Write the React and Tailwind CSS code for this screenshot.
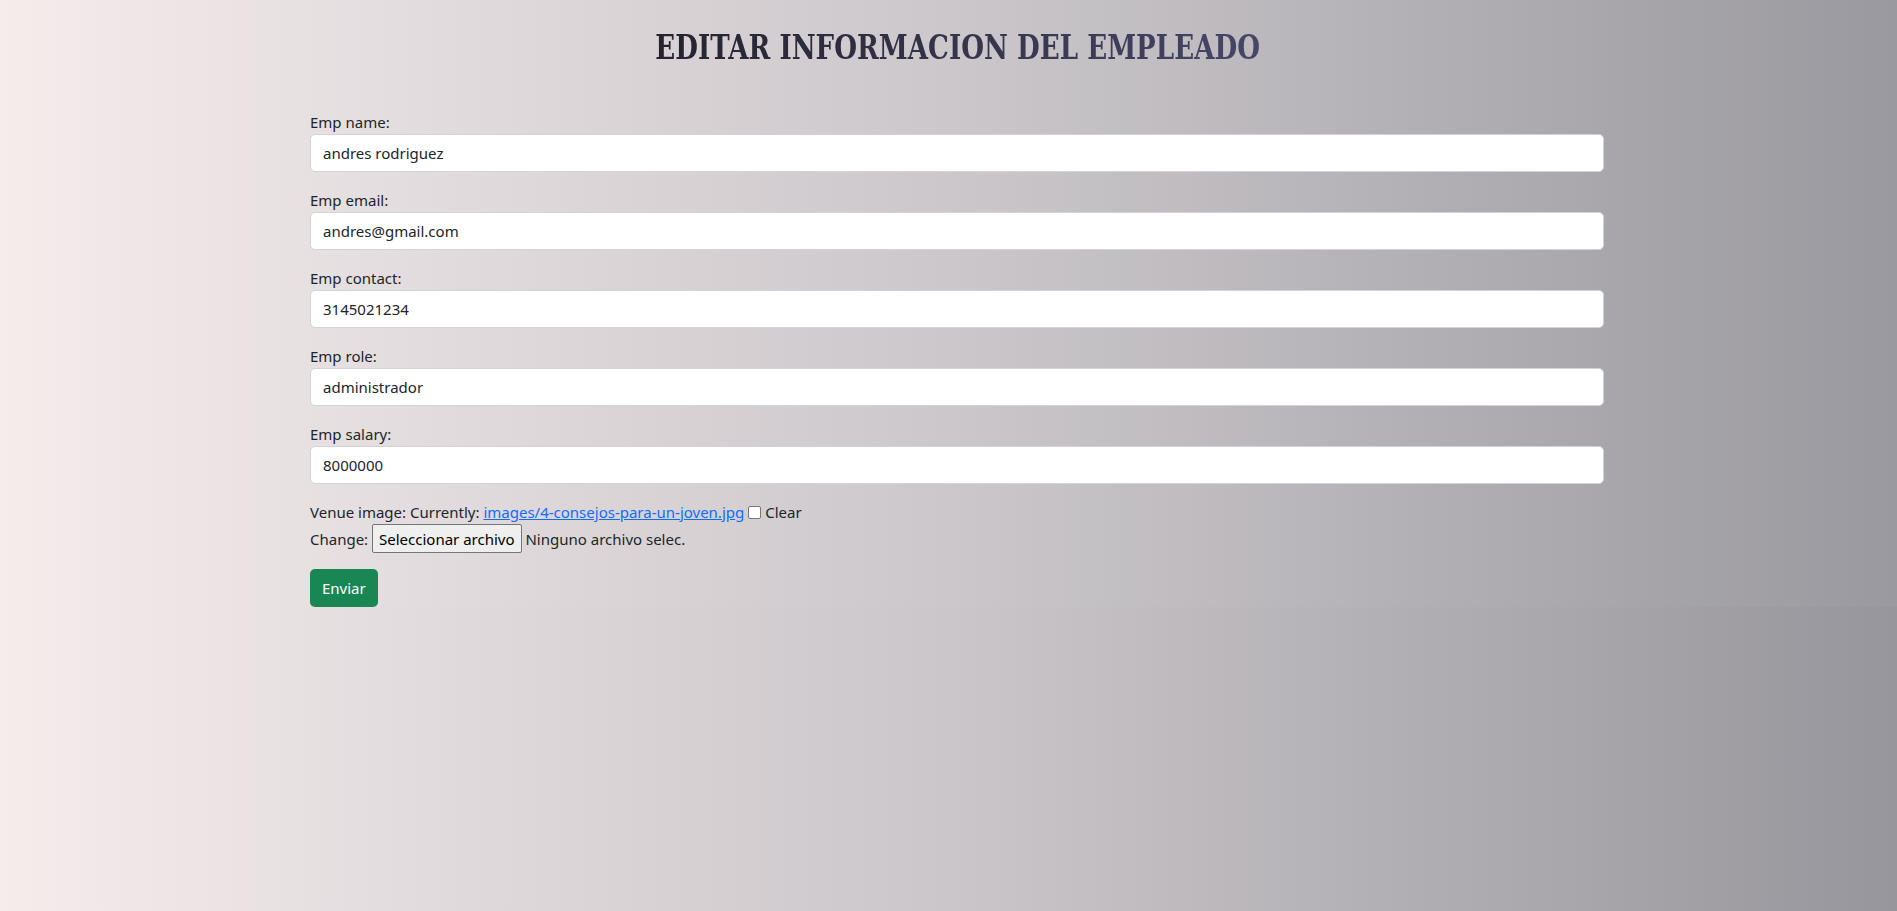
const fields = [
  { label: "Emp name:", value: "andres rodriguez" },
  { label: "Emp email:", value: "andres@gmail.com" },
  { label: "Emp contact:", value: "3145021234" },
  { label: "Emp role:", value: "administrador" },
  { label: "Emp salary:", value: "8000000" },
];

const Field = ({ label, value }) => (
  <div className="mb-4">
    <label className="block text-[15px] leading-6 text-[#212529]">{label}</label>
    <div className="h-[38px] w-full rounded-[5px] border border-[#ced4da] bg-white px-3 flex items-center text-[15px] text-[#212529]">
      {value}
    </div>
  </div>
);

export default function App() {
  return (
    <div
      className="min-h-screen w-full bg-gradient-to-r from-[#f5ecec] via-[#cbc6ca] to-[#97969c]"
      style={{ fontFamily: '"Noto Sans", "Open Sans", sans-serif' }}
    >
      <div className="bg-white/[0.03]">
        <h1
          className="pt-[23px] pb-[39px] pl-[18px] text-center text-[34px] leading-[48px] font-bold"
          style={{ fontFamily: '"DejaVu Serif", serif' }}
        >
          <span className="inline-block scale-x-[0.77] bg-gradient-to-r from-[#24232f] to-[#464668] bg-clip-text text-transparent">
            EDITAR INFORMACION DEL EMPLEADO
          </span>
        </h1>

        <form className="ml-[310px] w-[1294px]">
          {fields.map((f) => (
            <Field key={f.label} {...f} />
          ))}

          <div className="text-[15px] leading-6 text-[#212529] flex items-center">
            <span>Venue image: Currently:&nbsp;</span>
            <a href="#" className="text-[#0d6efd] underline">
              images/4-consejos-para-un-joven.jpg
            </a>
            <span className="mx-[4px] inline-block w-[13px] h-[13px] rounded-[2px] border border-[#767676] bg-white" />
            <span>Clear</span>
          </div>
          <div className="text-[15px] leading-6 text-[#212529] flex items-center">
            <span>Change:&nbsp;</span>
            <span className="h-[29px] px-[6px] flex items-center rounded-[2px] border border-[#767676] bg-[#efefef] text-black">
              Seleccionar archivo
            </span>
            <span>&nbsp;Ninguno archivo selec.</span>
          </div>

          <button
            type="button"
            className="mt-4 h-[38px] px-3 rounded-[5px] bg-[#198754] text-white text-[15px]"
          >
            Enviar
          </button>
        </form>
      </div>
    </div>
  );
}
